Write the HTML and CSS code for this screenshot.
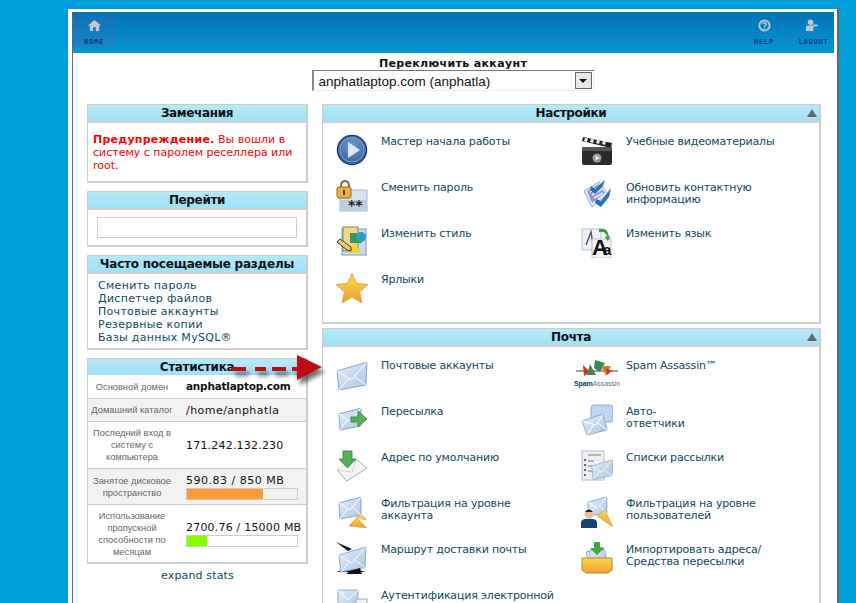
FILE: index.html
```html
<!DOCTYPE html>
<html lang="ru">
<head>
<meta charset="utf-8">
<title>cPanel</title>
<link rel="stylesheet" href="styles.css">
</head>
<body>
<svg class="defs" aria-hidden="true">
  <defs>
    <linearGradient id="env" x1="0" y1="0" x2="1" y2="1"><stop offset="0" stop-color="#e4eef8"/><stop offset="1" stop-color="#a9c6e4"/></linearGradient>
    <linearGradient id="gold" x1="0" y1="0" x2="0" y2="1"><stop offset="0" stop-color="#ffd84a"/><stop offset="1" stop-color="#f0a030"/></linearGradient>
    <radialGradient id="blue" cx=".5" cy=".35" r=".7"><stop offset="0" stop-color="#6f9bd0"/><stop offset="1" stop-color="#2d5a9a"/></radialGradient>
    <symbol id="mail" viewBox="0 0 32 32">
      <path d="M1 10 31 1 30 24 3 29Z" fill="url(#env)" stroke="#6e93bb" stroke-width=".8"/>
      <path d="M1 10 15 19 31 1M3 29 13 17M30 24 19 16" fill="none" stroke="#fff" stroke-width="1"/>
    </symbol>
    <symbol id="mailsm" viewBox="0 0 32 32">
      <path d="M3 7 25 1 25 19 4 23Z" fill="url(#env)" stroke="#6e93bb" stroke-width=".8"/>
      <path d="M3 7 14 14 25 1M4 23 12 12M25 19 17 12" fill="none" stroke="#fff" stroke-width="1"/>
    </symbol>
  </defs>
</svg>
<div class="window">
  <header class="topbar">
    <a class="tab tab-home">
      <svg class="top-icon" viewBox="0 0 14 14"><path d="M7 1 14 7H12V13H8.500V9H5.500V13H2V7H0Z" fill="#c4c8cc"/></svg>
      <span class="tab-label">HOME</span>
    </a>
    <div class="tab-right">
      <a class="tab">
        <svg class="top-icon" viewBox="0 0 14 14"><circle cx="7" cy="7" r="5.500" fill="none" stroke="#c4c8cc" stroke-width="2"/><path d="M5 5.500C5 3.500 9 3.500 9 5.500 9 7 7 7 7 8.500" fill="none" stroke="#c4c8cc" stroke-width="1.500"/><rect x="6.200" y="9.500" width="1.600" height="1.600" fill="#c4c8cc"/></svg>
        <span class="tab-label">HELP</span>
      </a>
      <a class="tab tab-logout">
        <svg class="top-icon" viewBox="0 0 14 14"><circle cx="6" cy="3.500" r="3" fill="#c4c8cc"/><path d="M1 13V9.500Q1 7 4 7H8L9 6H13.500V8H9V13Z" fill="#c4c8cc"/></svg>
        <span class="tab-label">LOGOUT</span>
      </a>
    </div>
  </header>

  <div class="switcher">
    <div class="switcher-title">Переключить аккаунт</div>
    <div class="select">
      <span class="select-value">anphatlaptop.com (anphatla)</span>
      <span class="select-btn"><i class="select-caret"></i></span>
    </div>
  </div>

  <div class="columns">
    <aside class="side">
      <section class="box box-notice">
        <h2 class="box-head">Замечания</h2>
        <p class="notice"><b>Предупреждение.</b> Вы вошли в систему с паролем реселлера или root.</p>
      </section>
      <section class="box box-goto">
        <h2 class="box-head">Перейти</h2>
        <div class="goto-body"><div class="goto-input"></div></div>
      </section>
      <section class="box box-freq">
        <h2 class="box-head">Часто посещаемые разделы</h2>
        <ul class="freq">
          <li>Сменить пароль</li>
          <li>Диспетчер файлов</li>
          <li>Почтовые аккаунты</li>
          <li>Резервные копии</li>
          <li>Базы данных MySQL®</li>
        </ul>
      </section>
      <section class="box box-stats">
        <h2 class="box-head">Статистика</h2>
        <div class="stat stat-1">
          <div class="stat-label">Основной домен</div>
          <div class="stat-value"><b>anphatlaptop.com</b></div>
        </div>
        <div class="stat stat-2 alt">
          <div class="stat-label">Домашний каталог</div>
          <div class="stat-value">/home/anphatla</div>
        </div>
        <div class="stat stat-3">
          <div class="stat-label">Последний вход в систему с компьютера</div>
          <div class="stat-value">171.242.132.230</div>
        </div>
        <div class="stat stat-4 alt">
          <div class="stat-label">Занятое дисковое пространство</div>
          <div class="stat-value">590.83 / 850 MB
            <div class="bar"><div class="bar-fill bar-orange" style="width:69%"></div></div>
          </div>
        </div>
        <div class="stat stat-5">
          <div class="stat-label">Использование пропускной способности по месяцам</div>
          <div class="stat-value">2700.76 / 15000 MB
            <div class="bar bar-white"><div class="bar-fill bar-green" style="width:18%"></div></div>
          </div>
        </div>
      </section>
      <div class="expand">expand stats</div>
    </aside>

    <main class="content">
      <section class="box panel panel-settings">
        <h2 class="box-head">Настройки<i class="collapse"></i></h2>
        <div class="grid">
          <div class="item">
            <svg class="icon" viewBox="0 0 32 32"><circle cx="16" cy="16" r="14.500" fill="url(#blue)" stroke="#24406f" stroke-width="1.500"/><circle cx="16" cy="16" r="12" fill="none" stroke="#8fb0da" stroke-width=".8"/><path d="M12 8 24 16 12 24Z" fill="#dfe8f3"/></svg>
            <span>Мастер начала работы</span>
          </div>
          <div class="item">
            <svg class="icon" viewBox="0 0 32 32"><path d="M1 7 2 3 31 9 30 14Z" fill="#222"/><path d="M4 4 7 4.500 6 8 3 7ZM10 5 13 5.500 12 9 9 8ZM16 6 19 6.500 18 10 15 9ZM22 7 25 7.500 24 11 21 10Z" fill="#eee"/><rect x="1" y="13" width="30" height="18" rx="2" fill="#2b2b2b"/><rect x="1" y="13" width="30" height="4" fill="#555"/><circle cx="16" cy="24" r="4.500" fill="#999"/><path d="M14.500 21.500 19 24 14.500 26.500Z" fill="#eee"/></svg>
            <span>Учебные видеоматериалы</span>
          </div>
          <div class="item">
            <svg class="icon" viewBox="0 0 32 32"><path d="M4 10H31V31H4Z" fill="#d8e3ee" stroke="#9fb2c6"/><path d="M5 20H30V30H5Z" fill="#bccddd"/><text x="12" y="30" class="stars">**</text><path d="M5 8V6Q5 1 9 1T13 6V8" fill="none" stroke="#8a6a3a" stroke-width="2"/><rect x="1" y="7" width="14" height="11" rx="2" fill="#e8b33a" stroke="#8a6a20"/><rect x="7" y="10" width="2" height="5" fill="#5a3a10"/></svg>
            <span>Сменить пароль</span>
          </div>
          <div class="item">
            <svg class="icon" viewBox="0 0 32 32"><path d="M3 11 18 2 27 14 11 27Z" fill="#e7edf6" stroke="#9aa8c8"/><path d="M6 11 18 4 24 13 11 23Z" fill="#8f97c8"/><path d="M9 12 20 6M11 15 21 9M13 18 22 13" stroke="#e7edf6" stroke-width="1.500"/><path d="M10 6 14 9 24 0 22 6 14 14 9 10Z" fill="#2c6fb5"/><path d="M15 19 20 21 30 8 28 17 20 27 14 23Z" fill="#2c6fb5"/></svg>
            <span>Обновить контактную<br>информацию</span>
          </div>
          <div class="item">
            <svg class="icon" viewBox="0 0 32 32"><rect x="6" y="3" width="24" height="26" fill="#c9dcee" stroke="#7d9ab8"/><rect x="7" y="1" width="15" height="24" fill="#f1d98a" stroke="#7d8a58"/><rect x="14" y="7" width="12" height="10" fill="#2f9a5a"/><circle cx="25" cy="11" r="5" fill="#2aa0c8"/><path d="M18 17 25 27H12Z" fill="#f3d228"/><path d="M1 16 4 13 15 21 15 25 11 24Z" fill="#e8d070" stroke="#333"/></svg>
            <span>Изменить стиль</span>
          </div>
          <div class="item">
            <svg class="icon" viewBox="0 0 32 32"><path d="M1 3H20V24H1Z" fill="#eef3f7" stroke="#b6c2cc"/><path d="M5 19 10 6 12 19" fill="none" stroke="#556" stroke-width="1.500"/><path d="M11 13H30V32H11Z" fill="#f5f5f5" stroke="#c0c0c0"/><text x="11" y="29" class="lang">A</text><text x="22" y="29" class="lang-sm">a</text><path d="M18 3Q27 1 28 11L30 9 27 15 23 10 26 11Q25 5 18 6Z" fill="#3a9a3a"/></svg>
            <span>Изменить язык</span>
          </div>
          <div class="item">
            <svg class="icon" viewBox="0 0 32 32"><path d="M16 1 20.500 11.500 32 12.500 23.500 20 26 31 16 25 6 31 8.500 20 0 12.500 11.500 11.500Z" fill="url(#gold)" stroke="#d89a40" stroke-width=".8"/></svg>
            <span>Ярлыки</span>
          </div>
        </div>
      </section>

      <section class="box panel panel-mail">
        <h2 class="box-head">Почта<i class="collapse"></i></h2>
        <div class="grid">
          <div class="item">
            <svg class="icon" viewBox="0 0 32 32"><use href="#mail" y="3"/></svg>
            <span>Почтовые аккаунты</span>
          </div>
          <div class="item">
            <svg class="icon icon-spam" viewBox="0 0 46 32"><path d="M2 13H44" stroke="#8a2020" stroke-width="1"/><path d="M9 7 16 14 10 18Z" fill="#c03a2a"/><path d="M16 6 22 17 13 17Z" fill="#3a8a50"/><path d="M21 2 31 5 26 14 20 10Z" fill="#2f8a60"/><path d="M27 8 37 8 32 18Z" fill="#d08030"/><path d="M32 10 38 13 33 17Z" fill="#c03a2a"/><text x="0" y="28" class="spam-text" textLength="46" lengthAdjust="spacingAndGlyphs"><tspan class="spam-a">Spam</tspan><tspan class="spam-b">Assassin</tspan></text></svg>
            <span>Spam Assassin™</span>
          </div>
          <div class="item">
            <svg class="icon" viewBox="0 0 32 32"><use href="#mailsm" y="3"/><path d="M15 12H22V6L31 14 22 22V17H15Z" fill="#5cae5c" stroke="#2f7d3a" stroke-width=".8" transform="translate(0 1)"/></svg>
            <span>Пересылка</span>
          </div>
          <div class="item">
            <svg class="icon" viewBox="0 0 32 32"><rect x="10" y="1" width="22" height="17" rx="3" fill="#bcd8f0" stroke="#8fb0d0"/><path d="M1 17 22 10 26 26 6 31Z" fill="url(#env)" stroke="#7d9ac0" stroke-width=".8"/><path d="M1 17 15 21 22 10M6 31 13 20M26 26 17 19" fill="none" stroke="#fff"/></svg>
            <span>Авто-<br>ответчики</span>
          </div>
          <div class="item">
            <svg class="icon" viewBox="0 0 32 32"><path d="M1 20 20 9 31 18 11 31Z" fill="#f5f5f5" stroke="#aaa"/><path d="M1 20 16 22 20 9" fill="#fff" stroke="#ccc"/><path d="M7 1H16V9H20L11.500 18 3 9H7Z" fill="#5cae5c" stroke="#35793f" stroke-width=".8"/></svg>
            <span>Адрес по умолчанию</span>
          </div>
          <div class="item">
            <svg class="icon" viewBox="0 0 32 32"><rect x="1" y="1" width="22" height="29" fill="#eef1f4" stroke="#b4bcc4"/><path d="M7 5H20M7 11H13M7 16H13M7 21H13" stroke="#778" stroke-width="1.200"/><path d="M3 10H5M3 15H5M3 20H5M3 25H5" stroke="#334" stroke-width="1.500"/><g transform="translate(10 9) scale(.7)"><use href="#mail" width="32" height="32"/></g></svg>
            <span>Списки рассылки</span>
          </div>
          <div class="item">
            <svg class="icon" viewBox="0 0 32 32"><use href="#mailsm"/><path d="M13 30 22 20Q27 17 30 24L21 22 31 32Z" fill="url(#gold)" stroke="#c89a40" stroke-width=".5"/></svg>
            <span>Фильтрация на уровне<br>аккаунта</span>
          </div>
          <div class="item">
            <svg class="icon" viewBox="0 0 32 32"><g transform="translate(4 0)"><use href="#mailsm" width="28" height="28"/></g><path d="M16 20 24 14 32 31Z" fill="url(#gold)" stroke="#c89a40" stroke-width=".5"/><circle cx="8" cy="18" r="4.500" fill="#e8c0a0"/><path d="M4 16Q8 11 12 16Z" fill="#222"/><path d="M0 32V27Q0 23 5 23H11Q16 23 16 27V32Z" fill="#14436e"/></svg>
            <span>Фильтрация на уровне<br>пользователей</span>
          </div>
          <div class="item">
            <svg class="icon" viewBox="0 0 32 32"><path d="M0 0 16 7 12 9Z" fill="#111"/><path d="M0 30 14 26 30 30Z" fill="#111"/><g transform="translate(2 4) scale(.9)"><use href="#mail" width="32" height="32"/></g><path d="M14 29 24 26 26 32H10Z" fill="#111"/></svg>
            <span>Маршрут доставки почты</span>
          </div>
          <div class="item">
            <svg class="icon" viewBox="0 0 32 32"><path d="M5 10 22 5 26 20H8Z" fill="#e4ecf5" stroke="#8aa"/><path d="M8 9 24 8 26 20H10Z" fill="url(#env)" stroke="#7d9ac0" stroke-width=".6"/><path d="M13 0H19V6H23L16 13 9 6H13Z" fill="#3aa83a"/><path d="M1 16H31V28L27 31H5L1 28Z" fill="url(#gold)" stroke="#b88a20"/></svg>
            <span>Импортировать адреса/<br>Средства пересылки</span>
          </div>
          <div class="item">
            <svg class="icon" viewBox="0 0 32 32"><path d="M2 2 22 2 22 22 2 22Z" fill="url(#env)" stroke="#8fa8c4"/><path d="M2 2 12 12 22 2" fill="none" stroke="#fff"/><rect x="20" y="11" width="11" height="10" fill="#eef2f6" stroke="#9aa"/></svg>
            <span>Аутентификация электронной</span>
          </div>
        </div>
      </section>
    </main>
  </div>

  <svg class="arrow" viewBox="0 0 100 32" aria-hidden="true">
    <path d="M0 15H14V19H0ZM23 15H34V19H23ZM40 15H54V19H40ZM60 15H65V3L90 15 65 28V19H60Z" fill="#c00b12"/>
  </svg>
</div>
</body>
</html>
```

FILE: styles.css
```css
* { box-sizing: border-box; }
html, body { height: 603px; overflow: hidden; }
body {
  margin: 0;
  background: #009fda;
  font-family: "DejaVu Sans", sans-serif;
  font-size: 11px;
  color: #0e4a60;
}
.defs { display: block; width: 0; height: 0; }

.window {
  position: relative;
  width: 771px;
  height: 700px;
  margin: 9px 0 0 68px;
  padding: 3px 0 0 4px;
  background: #fff;
  border-right: 2px solid #666;
}
.window::before {
  content: "";
  display: block;
  position: absolute;
  top: 3px; left: 4px; bottom: 0;
  width: 1px;
  background: #666;
}

.topbar {
  display: flex;
  justify-content: space-between;
  width: 762px;
  height: 41px;
  background: linear-gradient(#0473b3, #0596d2);
}
.tab {
  display: flex;
  flex-direction: column;
  align-items: center;
  width: 44px;
  height: 35px;
  padding-top: 7px;
}
.tab-home { background: linear-gradient(#0d70b6, #1b85c6); }
.tab-right { display: flex; gap: 3px; margin-right: 1px; }
.tab-right .tab { height: 41px; }
.top-icon { width: 13px; height: 13px; display: block; }
.tab-label {
  margin-top: 6px;
  font-family: "DejaVu Sans Mono", monospace;
  font-size: 7px;
  font-weight: bold;
  line-height: 8px;
  letter-spacing: .8px;
  color: #0b3a78;
}
.tab-logout .tab-label { margin-left: 5px; }

.switcher {
  display: flex;
  flex-direction: column;
  align-items: center;
  padding-top: 5px;
  width: 762px;
}
.switcher-title {
  font-weight: bold;
  font-size: 11px;
  line-height: 12px;
  color: #111;
  letter-spacing: .35px;
}
.select {
  display: flex;
  align-items: center;
  justify-content: space-between;
  width: 283px;
  height: 21px;
  padding: 1px 2px 0 5px;
  border: 1px solid #999;
  border-top-color: #777;
  border-left: 2px solid #888;
  border-bottom-color: #eee;
  border-right-color: #eee;
}
.select-value {
  font-family: "Liberation Sans", sans-serif;
  font-size: 13.500px;
  color: #111;
}
.select-btn {
  display: flex;
  align-items: center;
  justify-content: center;
  width: 17px;
  height: 17px;
  margin-top: -1px;
  background: #e8e8e8;
  border: 1px solid #666;
}
.select-caret {
  width: 0; height: 0;
  border: 4px solid transparent;
  border-top-color: #111;
  border-bottom: 0;
}

.columns {
  display: flex;
  gap: 14px;
  width: 762px;
  padding: 13px 0 0 15px;
}
.side { width: 221px; flex: none; }
.content { width: 499px; flex: none; }

.box {
  border-style: solid;
  border-width: 1px 2px 2px 1px;
  border-color: #ccc;
  background: #fff;
  margin-bottom: 8px;
}
.box-head {
  position: relative;
  margin: 0;
  height: 18px;
  font-size: 12px;
  line-height: 16px;
  font-weight: bold;
  text-align: center;
  white-space: nowrap;
  color: #111;
  background: linear-gradient(#b6e9f8, #9fe0f7);
  border-bottom: 2px solid #d0d0d0;
  letter-spacing: -.35px;
}

.box-notice { height: 79px; }
.notice {
  margin: 0;
  padding: 10px 5px 0 5px;
  line-height: 13px;
  color: #f00;
}
.notice b { letter-spacing: .25px; }
.box-goto { height: 56px; }
.goto-body { padding: 7px 9px; }
.goto-input { height: 21px; border: 1px solid #ccc; background: #fff; }
.box-freq { height: 95px; }
.box-freq .box-head { letter-spacing: -.22px; }
.freq {
  list-style: none;
  margin: 0;
  padding: 5px 0 0 10px;
  line-height: 13px;
  letter-spacing: .3px;
}

.box-stats { height: 206px; margin-bottom: 5px; }
.box-stats .box-head { height: 16px; border-bottom: 0; }
.stat {
  display: flex;
  align-items: center;
  border-bottom: 1px solid #ccc;
  color: #111;
  letter-spacing: .2px;
}
.stat:last-child { border-bottom: 0; }
.alt { background: #f2f2f2; }
.stat-1 { height: 24px; }
.stat-2 { height: 23px; letter-spacing: .45px; }
.stat-3 { height: 47px; }
.stat-4 { height: 36px; letter-spacing: .5px; }
.stat-5 { height: 57px; }
.stat-label {
  flex: none;
  width: 88px;
  margin-right: 10px;
  font-family: "Liberation Sans", sans-serif;
  font-size: 9.300px;
  line-height: 12px;
  text-align: center;
  letter-spacing: 0;
  color: #666;
}
.stat-value { line-height: 13px; white-space: nowrap; }
.stat-value b { font-size: 10.500px; letter-spacing: -.22px; }
.bar {
  width: 112px;
  height: 12px;
  margin-top: 1px;
  border: 1px solid #ccc;
  background: #f2f2f2;
}
.bar-white { background: #fff; }
.bar-fill { height: 100%; }
.bar-orange { background: #f93; }
.bar-green { background: #8f0; }
.expand { text-align: center; letter-spacing: .15px; }

.panel { margin-bottom: 4px; }
.panel-settings { height: 220px; }
.panel-mail { height: 330px; }
.collapse {
  position: absolute;
  right: 2px;
  top: 4px;
  width: 0; height: 0;
  border: 5px solid transparent;
  border-bottom: 8px solid #666;
  border-top: 0;
}
.grid {
  display: grid;
  grid-template-columns: 245px 245px;
  grid-auto-rows: 46px;
  padding: 11px 0 0 13px;
}
.item {
  display: flex;
  align-items: flex-start;
  gap: 13px;
  line-height: 12px;
  letter-spacing: -.18px;
}
.item span { padding-top: 2px; }
.icon { flex: none; width: 32px; height: 32px; display: block; }
.icon-spam { width: 46px; height: 32px; margin: 0 -7px; }
.stars { font: bold 14px "DejaVu Sans", sans-serif; fill: #222; }
.lang { font: bold 22px "Liberation Sans", sans-serif; fill: #111; }
.lang-sm { font: bold 15px "Liberation Sans", sans-serif; fill: #111; }
.spam-text { font: bold 8px "Liberation Sans", sans-serif; }
.spam-a { fill: #14406a; }
.spam-b { fill: #6a7a88; font-weight: normal; }

.arrow {
  position: absolute;
  left: 164px;
  top: 343px;
  width: 100px;
  height: 32px;
  filter: drop-shadow(3px 5px 2px rgba(0, 0, 0, .55));
}
```
